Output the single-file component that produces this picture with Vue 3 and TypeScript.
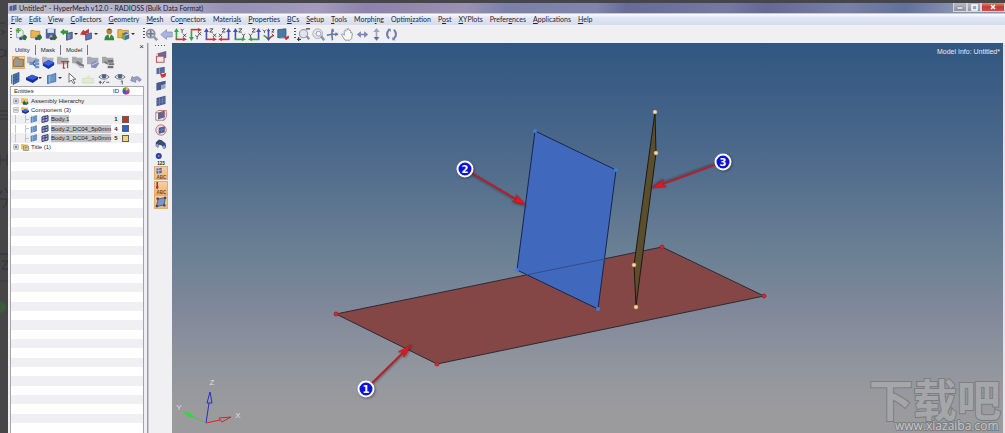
<script setup lang="ts">
interface MenuItem { label: string; key: number }
interface Tool { icon: string; name: string; caret?: boolean; active?: boolean }
interface Entity { name: string; icon: string; level: number; expand?: string; id?: number; color?: string }
interface Callout { n: number; x: number; y: number; tx: number; ty: number }

const menus: MenuItem[] = [
  { label: 'File', key: 0 }, { label: 'Edit', key: 0 }, { label: 'View', key: 0 },
  { label: 'Collectors', key: 0 }, { label: 'Geometry', key: 0 }, { label: 'Mesh', key: 0 },
  { label: 'Connectors', key: 2 }, { label: 'Materials', key: 7 }, { label: 'Properties', key: 0 },
  { label: 'BCs', key: 0 }, { label: 'Setup', key: 0 }, { label: 'Tools', key: 0 },
  { label: 'Morphing', key: 5 }, { label: 'Optimization', key: 5 }, { label: 'Post', key: 1 },
  { label: 'XYPlots', key: 0 }, { label: 'Preferences', key: 6 }, { label: 'Applications', key: 0 },
  { label: 'Help', key: 0 },
]

const fileTools: Tool[] = [
  { icon: 'new', name: 'New model' }, { icon: 'open', name: 'Open model' }, { icon: 'save', name: 'Save model' },
  { icon: 'import', name: 'Import', caret: true }, { icon: 'export', name: 'Export', caret: true },
  { icon: 'user', name: 'User profile' }, { icon: 'load', name: 'Load', caret: true },
]
const viewTools: Tool[] = [
  { icon: 'fit', name: 'Fit' }, { icon: 'back', name: 'Previous view' }, { icon: 'xy', name: 'XY top' },
  { icon: 'xyb', name: 'XY bottom' }, { icon: 'xz', name: 'XZ left' }, { icon: 'xzr', name: 'XZ right' },
  { icon: 'yz', name: 'YZ front' }, { icon: 'yzr', name: 'YZ rear' }, { icon: 'iso', name: 'Isometric' },
  { icon: 'saved', name: 'User views' },
]
const moveTools: Tool[] = [
  { icon: 'zoom', name: 'Zoom in or out' }, { icon: 'zoomc', name: 'Circle zoom' }, { icon: 'rotate', name: 'Rotate' },
  { icon: 'pan', name: 'Pan' }, { icon: 'lr', name: 'Rotate left or right' }, { icon: 'ud', name: 'Rotate up or down' },
  { icon: 'spin', name: 'Spin' },
]
const createTools: Tool[] = [
  { icon: 'folder', name: 'Model view', active: true }, { icon: 'tree', name: 'Assembly view' },
  { icon: 'comp', name: 'Component view' }, { icon: 'prop', name: 'Property view' },
  { icon: 'mat', name: 'Material view' }, { icon: 'include', name: 'Include view' }, { icon: 'stack', name: 'Load view' },
]
const selectTools: Tool[] = [
  { icon: 'geom', name: 'Elements and geometry' }, { icon: 'blue', name: 'Components', caret: true },
  { icon: 'flag', name: 'Geometry', caret: true }, { icon: 'cursor', name: 'Selector' },
  { icon: 'add', name: 'Add to panel' }, { icon: 'eyepm', name: 'Show or hide' },
  { icon: 'eye1', name: 'Isolate' }, { icon: 'undo', name: 'Reverse' },
]
const sideTools: Tool[] = [
  { icon: 'mask', name: 'Mask' }, { icon: 'unmask', name: 'Reverse mask' }, { icon: 'adj', name: 'Unmask adjacent' },
  { icon: 'all', name: 'Unmask all' }, { icon: 'shown', name: 'Unmask shown' }, { icon: 'sphere', name: 'Spherical clip' },
  { icon: 'find', name: 'Find' }, { icon: 'num', name: 'Numbers' },
  { icon: 'abc1', name: 'Element labels', active: true }, { icon: 'abc2', name: 'Load labels', active: true },
  { icon: 'handles', name: 'Element handles', active: true },
]

const tabs: string[] = ['Utility', 'Mask', 'Model']
const entities: Entity[] = [
  { name: 'Assembly Hierarchy', icon: 'asm', level: 0, expand: 'plus' },
  { name: 'Component (3)', icon: 'compf', level: 0, expand: 'minus' },
  { name: 'Body.1', icon: 'flag', level: 1, id: 1, color: '#c8321e' },
  { name: 'Body.2_DC04_5p0mm', icon: 'flag', level: 1, id: 4, color: '#2f62cf' },
  { name: 'Body.3_DC04_3p0mm', icon: 'flag', level: 1, id: 5, color: '#ecd774' },
  { name: 'Title (1)', icon: 'title', level: 0, expand: 'plus' },
]
const emptyRows = 30

const callouts: Callout[] = [
  { n: 1, x: 366, y: 389, tx: 411, ty: 345 },
  { n: 2, x: 465, y: 169, tx: 526, ty: 205 },
  { n: 3, x: 723, y: 162, tx: 652, ty: 188 },
]
const angle = (c: Callout): number => (Math.atan2(c.ty - c.y, c.tx - c.x) * 180) / Math.PI
const reach = (c: Callout): number => Math.hypot(c.tx - c.x, c.ty - c.y)
</script>

<template>
  <svg class="defs" aria-hidden="true">
    <defs>
      <symbol id="i-new" viewBox="0 0 16 16"><path d="M2 1h5l3 3v8H2z" fill="#e9edf4" stroke="#8d96a8" /><path d="M4 0v6M1 3h6" stroke="#3fae3a" stroke-width="2" /><path d="M5 12l3-3 3 3-3 2z" fill="#d6b13b" /><path d="M9 10l3-2 3 3-2 4-4-1z" fill="#2d6e3a" /><circle cx="7" cy="13" r="2" fill="#2b4ea8" /></symbol>
      <symbol id="i-open" viewBox="0 0 16 16"><path d="M1 3h4l1 1h6v8H1z" fill="#e8b456" stroke="#b98630" /><path d="M5 11l3-3 3 3-3 3z" fill="#d6b13b" /><path d="M9 9l4-1 2 4-3 3-3-1z" fill="#2d6e3a" /><circle cx="8" cy="13" r="2" fill="#2b4ea8" /></symbol>
      <symbol id="i-save" viewBox="0 0 16 16"><path d="M1 1h12v12H1z" fill="#4a64a2" /><path d="M3 1h8v5H3z" fill="#dde4f2" /><path d="M5 11l3-3 3 3-3 3z" fill="#d6b13b" /><path d="M9 9l4-1 2 4-3 3-3-1z" fill="#2d6e3a" /><circle cx="8" cy="13" r="2" fill="#2b4ea8" /></symbol>
      <symbol id="i-import" viewBox="0 0 16 16"><path d="M0 5l5-4v2h5v4H5v2z" fill="#2e9b35" /><path d="M8 7l7-2v8l-7 2z" fill="#5f76ac" stroke="#3c4a79" /><path d="M11 7v7" stroke="#8fa0c6" /></symbol>
      <symbol id="i-export" viewBox="0 0 16 16"><path d="M0 8l4-6 2 2 5-3v5l-4 1 1 2z" fill="#c93434" /><path d="M7 8l7-2v7l-7 2z" fill="#5f76ac" stroke="#3c4a79" /></symbol>
      <symbol id="i-user" viewBox="0 0 16 16"><circle cx="9" cy="4" r="3.500" fill="#b4803e" /><path d="M5 3q4-4 8 0l-1-1H6z" fill="#4c3018" /><path d="M3 15q0-7 6-7t6 7z" fill="#2f8a39" /><path d="M8 8l1 5 2-5z" fill="#f2f2f2" /></symbol>
      <symbol id="i-load" viewBox="0 0 16 16"><path d="M1 2h5l1 1h7v9H1z" fill="#e9b44c" stroke="#b98630" /><path d="M6 7l5-2 4 2v6l-5 2-4-2z" fill="#4b6db4" /><path d="M6 7l4 2v6l-4-2z" fill="#79a852" /><path d="M10 9l5-2" stroke="#fff" /></symbol>
      <symbol id="i-fit" viewBox="0 0 16 16"><circle cx="7" cy="7" r="5" fill="#d2d7e2" stroke="#8e94a6" stroke-width="2" /><path d="M11 11l4 4" stroke="#8e94a6" stroke-width="3" /><path d="M7 3v8M3 7h8" stroke="#6d7590" stroke-width="2" /></symbol>
      <symbol id="i-back" viewBox="0 0 16 16"><path d="M1 8l7-6v3h7v6H8v3z" fill="#a9b5dc" stroke="#8793c0" /></symbol>
      <symbol id="i-xy" viewBox="0 0 16 16"><path d="M3 14V3" stroke="#3aa34a" stroke-width="2" /><path d="M2 14h11" stroke="#c83a40" stroke-width="2" /><path d="M0 5l3-5 3 5z" fill="#3aa34a" /><path d="M11 11l5 3-5 2z" fill="#c83a40" /><path d="M8 1l2 2 2-2M10 3v3M11 7l4 4M15 7l-4 4" stroke="#333" fill="none" /></symbol>
      <symbol id="i-xyb" viewBox="0 0 16 16"><path d="M3 3v11" stroke="#3aa34a" stroke-width="2" /><path d="M2 2h11" stroke="#c83a40" stroke-width="2" /><path d="M0 11l3 5 3-5z" fill="#3aa34a" /><path d="M11 0l5 2-5 3z" fill="#c83a40" /><path d="M8 9l2 2 2-2M10 11v3M11 5l4 4M15 5l-4 4" stroke="#333" fill="none" /></symbol>
      <symbol id="i-xz" viewBox="0 0 16 16"><path d="M3 14V3" stroke="#4353b5" stroke-width="2" /><path d="M2 14h11" stroke="#c83a40" stroke-width="2" /><path d="M0 5l3-5 3 5z" fill="#4353b5" /><path d="M11 11l5 3-5 2z" fill="#c83a40" /><path d="M7 1h4L7 5h4M11 7l4 4M15 7l-4 4" stroke="#333" fill="none" /></symbol>
      <symbol id="i-xzr" viewBox="0 0 16 16"><path d="M13 14V3" stroke="#4353b5" stroke-width="2" /><path d="M3 14h11" stroke="#c83a40" stroke-width="2" /><path d="M10 5l3-5 3 5z" fill="#4353b5" /><path d="M5 11l-5 3 5 2z" fill="#c83a40" /><path d="M5 1h4L5 5h4M1 7l4 4M5 7l-4 4" stroke="#333" fill="none" /></symbol>
      <symbol id="i-yz" viewBox="0 0 16 16"><path d="M3 14V3" stroke="#4353b5" stroke-width="2" /><path d="M2 14h11" stroke="#3aa34a" stroke-width="2" /><path d="M0 5l3-5 3 5z" fill="#4353b5" /><path d="M11 11l5 3-5 2z" fill="#3aa34a" /><path d="M7 1h4L7 5h4M11 7l2 2 2-2M13 9v3" stroke="#333" fill="none" /></symbol>
      <symbol id="i-yzr" viewBox="0 0 16 16"><path d="M13 14V3" stroke="#4353b5" stroke-width="2" /><path d="M3 14h11" stroke="#3aa34a" stroke-width="2" /><path d="M10 5l3-5 3 5z" fill="#4353b5" /><path d="M5 11l-5 3 5 2z" fill="#3aa34a" /><path d="M5 1h4L5 5h4M1 7l2 2 2-2M3 9v3" stroke="#333" fill="none" /></symbol>
      <symbol id="i-iso" viewBox="0 0 16 16"><path d="M8 12V3" stroke="#4353b5" stroke-width="2" /><path d="M8 13L2 9" stroke="#3aa34a" stroke-width="2" /><path d="M8 13l6-4" stroke="#c83a40" stroke-width="2" /><path d="M6 4l2-4 2 4z" fill="#4353b5" /><path d="M5 12l3 4 3-4z" fill="#4a5a8a" /><path d="M1 2l2 2 2-2M3 4v2M12 2h3l-3 3h3M12 7l3 3" stroke="#333" fill="none" /></symbol>
      <symbol id="i-saved" viewBox="0 0 16 16"><path d="M1 2l10-1v10L1 12z" fill="#4a7aa8" stroke="#34557c" /><path d="M2 13l4-2 4 2" fill="#7c93ba" /><path d="M8 10l3 5 4-3-1-3-2 2z" fill="#d03034" /></symbol>
      <symbol id="i-zoom" viewBox="0 0 16 16"><circle cx="8" cy="7" r="5" fill="#e2e5ec" stroke="#9ba1b1" stroke-width="1.500" /><path d="M12 10l3 4" stroke="#8d94a6" stroke-width="3" /><path d="M2 11v5M0 14h5M11 1h5" stroke="#444" stroke-width="1.500" /></symbol>
      <symbol id="i-zoomc" viewBox="0 0 16 16"><circle cx="7" cy="7" r="6" fill="#e2e5ec" stroke="#a3a9b8" /><circle cx="8" cy="7" r="3" fill="#f3f3f6" stroke="#8d94a6" /><path d="M11 10l4 5" stroke="#8d94a6" stroke-width="3" /></symbol>
      <symbol id="i-rotate" viewBox="0 0 16 16"><path d="M8 1q-2 7 0 14M1 9q7-2 14-1" fill="none" stroke="#6a75a4" stroke-width="2" /><path d="M6 4l3-3 1 4zM12 5l3 3-4 2z" fill="#6a75a4" /></symbol>
      <symbol id="i-pan" viewBox="0 0 16 16"><path d="M5 15L1 9q-1-3 2-1l1 1V4q1-2 2 0V2q1-2 2 0V1q2-1 2 1v1q2-1 2 1v2q2-1 2 1l-1 6-2 2z" fill="#f7f7f7" stroke="#848891" /></symbol>
      <symbol id="i-lr" viewBox="0 0 16 16"><path d="M1 8l5-4v3h4V4l5 4-5 4V9H6v3z" fill="#7b84b5" /></symbol>
      <symbol id="i-ud" viewBox="0 0 16 16"><path d="M8 0l4 5H9v6h3l-4 5-4-5h3V5H4z" fill="#9aa4cc" /><path d="M5 11h6l-3 4z" fill="#5f699b" /></symbol>
      <symbol id="i-spin" viewBox="0 0 16 16"><path d="M5 2q-5 6 0 11M11 2q5 6 0 11" fill="none" stroke="#727daf" stroke-width="2.500" /><path d="M3 1h4v4zM13 15H9v-4z" fill="#727daf" /></symbol>
      <symbol id="i-folder" viewBox="0 0 16 16"><path d="M2 5q0-1 1-1l1-2h4l1 2h5v9H2z" fill="#a19787" stroke="#74695b" /></symbol>
      <symbol id="i-tree" viewBox="0 0 16 16"><path d="M0 1h5l1 1h7v7H0z" fill="#b5b6b9" /><path d="M4 9h3M7 9l4-4M7 9l4 4" stroke="#4569a9" stroke-width="2" /><path d="M3 7h4v4H3zM10 4h5v3h-5zM10 8h5v3h-5zM10 12h5v3h-5z" fill="#6b95cf" /></symbol>
      <symbol id="i-comp" viewBox="0 0 16 16"><path d="M0 1h5l1 1h8v7H0z" fill="#b5b6b9" /><path d="M1 9l7-4 7 3v3l-7 5-7-4z" fill="#1836ae" /><path d="M1 9l7-4 7 3-7 4z" fill="#3a64dc" /></symbol>
      <symbol id="i-prop" viewBox="0 0 16 16"><path d="M0 1h5l1 1h8v8H0z" fill="#b0b0b3" /><path d="M5 7h10M8 7v8M13 7v8M7 15h3" stroke="#ad4648" stroke-width="1.500" /></symbol>
      <symbol id="i-mat" viewBox="0 0 16 16"><path d="M0 1h5l1 1h7v7H0z" fill="#a9aaad" /><path d="M3 9l4-3 8 5-1 4-4-1z" fill="#77797d" /><path d="M4 9l4 3 6 2" stroke="#dddde0" stroke-width="1.500" fill="none" /></symbol>
      <symbol id="i-include" viewBox="0 0 16 16"><path d="M0 1h5l1 1h8v8H0z" fill="#a8aab3" /><path d="M5 9l5-3 5 3-4 6-6-1z" fill="#878fbf" /><path d="M6 11l7-3" stroke="#d6daf0" /></symbol>
      <symbol id="i-stack" viewBox="0 0 16 16"><path d="M0 1h5l1 1h8v7H0z" fill="#a6a6aa" /><path d="M7 5h7v3H7zM8 9h7v2H8zM7 12h7v3H7z" fill="#747478" /><path d="M3 7l4 3" stroke="#747478" stroke-width="2" /></symbol>
      <symbol id="i-geom" viewBox="0 0 16 16"><path d="M4 3l8-3v12l-8 4z" fill="#4e79b8" stroke="#2c4f88" /><path d="M2 3v12M8 2v12M4 7l8-3M4 11l8-3" stroke="#2f5288" /></symbol>
      <symbol id="i-blue" viewBox="0 0 16 16"><path d="M0 7l8-4 8 3v3l-7 5-9-4z" fill="#142c9c" /><path d="M0 7l8-4 8 3-7 4z" fill="#345ad6" /></symbol>
      <symbol id="i-flag" viewBox="0 0 16 16"><path d="M2 4q5 0 11-3v11q-6 1-11 3z" fill="#6997cd" stroke="#34619f" /><path d="M5 4v10" stroke="#a8c7e8" /></symbol>
      <symbol id="i-cursor" viewBox="0 0 16 16"><path d="M4 1v12l3-3 3 5 2-1-3-5h4z" fill="#fff" stroke="#444" /></symbol>
      <symbol id="i-add" viewBox="0 0 16 16"><path d="M1 8h14v6H1z" fill="#e2ecd2" stroke="#cbdab8" /><path d="M5 8l4-5 3 5z" fill="#e6e5c3" /></symbol>
      <symbol id="i-eyepm" viewBox="0 0 16 16"><path d="M1 6q7-7 14 0-7 6-14 0z" fill="#e6e9ee" stroke="#59606e" /><circle cx="8" cy="5" r="3" fill="#4e6684" /><path d="M1 13h4M3 11v4M6 15l3-4M11 13h4" stroke="#333" /></symbol>
      <symbol id="i-eye1" viewBox="0 0 16 16"><path d="M1 6q7-7 14 0-7 6-14 0z" fill="#e6e9ee" stroke="#59606e" /><circle cx="8" cy="5" r="3" fill="#4e6684" /><path d="M9 12l2-1v5" stroke="#333" fill="none" /></symbol>
      <symbol id="i-undo" viewBox="0 0 16 16"><path d="M1 11l2-6 2 2q6-4 10 3l-3 2q-2-4-5-2l1 3z" fill="#9d9fc8" stroke="#7b7daa" /></symbol>
      <symbol id="i-mask" viewBox="0 0 16 16"><path d="M4 3l11-3v9l-11 3z" fill="#56699c" /><path d="M2 7h10v8H2z" fill="#f1eaee" stroke="#c2575d" stroke-width="1.500" /><path d="M2 4h10v4" fill="none" stroke="#c2575d" /></symbol>
      <symbol id="i-unmask" viewBox="0 0 16 16"><path d="M2 3l11-2v8L2 11z" fill="#56699c" /><path d="M6 3v7" stroke="#a2aecb" /><path d="M6 9l4 2 5-2-1 5-5 2z" fill="#cf3434" /></symbol>
      <symbol id="i-adj" viewBox="0 0 16 16"><path d="M2 4l12-3v10L2 14z" fill="#98a5c4" /><path d="M2 4l12-3v4L8 7v6l-6 1z" fill="#485b91" /></symbol>
      <symbol id="i-all" viewBox="0 0 16 16"><path d="M2 4l12-3v11L2 15z" fill="#485b91" /><path d="M6 3v11M10 2v11M2 8l12-3M2 11l12-3" stroke="#7685b0" /></symbol>
      <symbol id="i-shown" viewBox="0 0 16 16"><path d="M4 5l9-3v9l-9 3z" fill="#56699c" /><path d="M1 5h11v10H1zM1 5l3-3h11v9l-3 4" fill="none" stroke="#c2575d" /></symbol>
      <symbol id="i-sphere" viewBox="0 0 16 16"><circle cx="8" cy="8" r="7" fill="#e8dfe3" stroke="#c2575d" /><path d="M5 5l8-2v8l-8 2z" fill="#485b91" /><path d="M9 4v8M5 9l8-2" stroke="#7685b0" /></symbol>
      <symbol id="i-find" viewBox="0 0 16 16"><path d="M1 6l4-4 4 1 5 4 1 5-3 3-3-5-3-1-2 4-3-2z" fill="#3a4d7a" /><circle cx="3" cy="10" r="2" fill="#8da4cc" /><circle cx="12" cy="12" r="2" fill="#8da4cc" /></symbol>
      <symbol id="i-num" viewBox="0 0 16 16"><circle cx="5" cy="4" r="4" fill="#2f3fa4" /><circle cx="5" cy="4" r="1" fill="#b9c2ec" /><text x="3" y="16" font-size="6" font-weight="700" fill="#222">123</text></symbol>
      <symbol id="i-abc1" viewBox="0 0 16 16"><path d="M2 2l7-1v7l-7 1z" fill="#56699c" /><path d="M5 1v8M2 5l7-1" stroke="#c8cfe0" /><text x="2" y="16" font-size="6" font-weight="700" fill="#7c4522">ABC</text></symbol>
      <symbol id="i-abc2" viewBox="0 0 16 16"><path d="M3 0v9" stroke="#a82b2b" stroke-width="2" /><path d="M1 6h4l-2 4z" fill="#a82b2b" /><text x="2" y="16" font-size="6" font-weight="700" fill="#7c4522">ABC</text></symbol>
      <symbol id="i-handles" viewBox="0 0 16 16"><path d="M4 4l10-2-2 10-10 2z" fill="#7997c8" stroke="#34496f" /><path d="M2 2h3v3H2zM12 1h3v3h-3zM1 12h3v3H1zM11 11h3v3h-3z" fill="#34496f" /></symbol>
      <symbol id="i-asm" viewBox="0 0 16 16"><path d="M0 2h6l1 1h7v9H0z" fill="#ecc85a" /><path d="M3 11l4-4 4 3 3-1 1 4-4 3-6-1z" fill="#2f7a40" /><circle cx="6" cy="13" r="2.500" fill="#2748b2" /><path d="M8 8l3 3" stroke="#e8d24d" stroke-width="2" /></symbol>
      <symbol id="i-compf" viewBox="0 0 16 16"><path d="M0 2h6l1 1h7v8H0z" fill="#ecc85a" /><path d="M2 9l7-3 7 3v3l-7 4-7-3z" fill="#1a35ab" /><path d="M2 9l7-3 7 3-7 3z" fill="#436be0" /></symbol>
      <symbol id="i-title" viewBox="0 0 16 16"><path d="M0 2h6l1 1h7v10H0z" fill="#ecc85a" /><path d="M5 6h10v9H5z" fill="#d8d2bd" stroke="#6c5b36" /><path d="M7 9h6M7 12h5" stroke="#6c5b36" /></symbol>
      <symbol id="i-mesh" viewBox="0 0 16 16"><path d="M2 4l12-3v11L2 15z" fill="#a6aacb" stroke="#3a3f78" stroke-width="2" /><path d="M8 2v12M2 9l12-3" stroke="#3a3f78" stroke-width="2" /></symbol>
      <symbol id="i-plus" viewBox="0 0 16 16"><path d="M2 2h12v12H2z" fill="#fff" stroke="#9a9a9e" stroke-width="2" /><path d="M4 8h8M8 4v8" stroke="#444" stroke-width="2" /></symbol>
      <symbol id="i-minus" viewBox="0 0 16 16"><path d="M2 2h12v12H2z" fill="#fff" stroke="#9a9a9e" stroke-width="2" /><path d="M4 8h8" stroke="#444" stroke-width="2" /></symbol>
    </defs>
  </svg>

  <div class="desktop">
    <svg class="backdrop" viewBox="0 3 8 430" preserveAspectRatio="xMinYMin slice" aria-hidden="true">
      <path d="M0 23h5M1 30l4 2-4 3M0 50q4-2 5 2t-5 5M6 49v8M0 111h8M0 115h8M0 119h8M0 154v12M0 160h7M7 154v12M2 190l-2 4M5 188l3 5M0 199h7q0 6-4 9M0 254h8M2 261h6l-6 8h6" fill="none" stroke="#333234" />
      <path d="M0 281h8" stroke="#3b3a3c" />
      <circle cx="0" cy="307" r="6" fill="#3d5a3f" />
    </svg>

    <div class="window">
      <header class="titlebar">
        <svg class="logo" viewBox="0 0 16 16" aria-hidden="true"><path d="M1 5l5-2v10l-5 1zM7 3l8-2v11l-8 2z" fill="#53618c" /></svg>
        <h1>Untitled* - HyperMesh v12.0 - RADIOSS (Bulk Data Format)</h1>
        <div class="controls">
          <button type="button" aria-label="Minimize"><svg viewBox="0 0 12 8"><path d="M3 4h6v2H3z" fill="#fff" stroke="#666" stroke-width=".5" /></svg></button>
          <button type="button" aria-label="Restore"><svg viewBox="0 0 12 8"><path d="M4 2h5v5H4z" fill="none" stroke="#fff" stroke-width="1.500" /></svg></button>
          <button type="button" class="close" aria-label="Close"><svg viewBox="0 0 12 8"><path d="M4 2l4 4M8 2L4 6" stroke="#fff" stroke-width="1.500" /></svg></button>
        </div>
      </header>

      <nav class="menubar">
        <button v-for="m in menus" :key="m.label" type="button">{{ m.label.slice(0, m.key) }}<u>{{ m.label[m.key] }}</u>{{ m.label.slice(m.key + 1) }}</button>
      </nav>

      <div class="toolbar">
        <i class="grip"></i>
        <div class="group files">
          <button v-for="t in fileTools" :key="t.icon" type="button" class="tool" :class="[t.icon, { drop: t.caret }]" :aria-label="t.name">
            <svg class="icon"><use :href="'#i-' + t.icon" /></svg>
          </button>
        </div>
        <i class="grip"></i>
        <div class="group views">
          <button v-for="t in viewTools" :key="t.icon" type="button" class="tool" :aria-label="t.name">
            <svg class="icon"><use :href="'#i-' + t.icon" /></svg>
          </button>
        </div>
        <i class="grip"></i>
        <div class="group moves">
          <button v-for="t in moveTools" :key="t.icon" type="button" class="tool" :aria-label="t.name">
            <svg class="icon"><use :href="'#i-' + t.icon" /></svg>
          </button>
        </div>
      </div>

      <main class="body">
        <aside class="browser">
          <div class="tabs">
            <button v-for="t in tabs" :key="t" type="button">{{ t }}</button>
            <button type="button" class="shut" aria-label="Close browser">×</button>
          </div>
          <div class="row create">
            <button v-for="t in createTools" :key="t.icon" type="button" class="tool" :class="{ active: t.active }" :aria-label="t.name">
              <svg class="icon"><use :href="'#i-' + t.icon" /></svg>
            </button>
          </div>
          <div class="row select">
            <button v-for="t in selectTools" :key="t.icon" type="button" class="tool" :class="{ drop: t.caret }" :aria-label="t.name">
              <svg class="icon"><use :href="'#i-' + t.icon" /></svg>
            </button>
          </div>
          <div class="sheet">
            <table>
              <thead>
                <tr>
                  <th class="name">Entities</th>
                  <th class="id">ID</th>
                  <th class="swatch">
                    <svg viewBox="0 0 16 16" role="img" aria-label="Color"><circle cx="8" cy="8" r="7" fill="#3a56d8" /><path d="M8 8V1a7 7 0 0 1 6 4z" fill="#d9c93d" /><path d="M8 8L2 4a7 7 0 0 1 6-3z" fill="#3fae52" /><path d="M8 8l6-3a7 7 0 0 1-2 8z" fill="#d84238" /><path d="M8 8l4 5a7 7 0 0 1-5 2z" fill="#b23fb8" /></svg>
                  </th>
                  <th class="rest"></th>
                </tr>
              </thead>
              <tbody>
                <tr v-for="e in entities" :key="e.name">
                  <td>
                    <div class="entity" :class="{ child: e.level }">
                      <svg v-if="e.expand" class="expander"><use :href="'#i-' + e.expand" /></svg>
                      <svg class="glyph"><use :href="'#i-' + e.icon" /></svg>
                      <svg v-if="e.level" class="glyph"><use href="#i-mesh" /></svg>
                      <span>{{ e.name }}</span>
                    </div>
                  </td>
                  <td class="id"><b v-if="e.id">{{ e.id }}</b></td>
                  <td class="swatch"><i v-if="e.color" :style="{ background: e.color }"></i></td>
                  <td></td>
                </tr>
                <tr v-for="n in emptyRows" :key="n" aria-hidden="true"><td colspan="4"></td></tr>
              </tbody>
            </table>
          </div>
        </aside>

        <div class="strip">
          <i class="grip flat"></i>
          <div class="stack">
            <button v-for="t in sideTools" :key="t.icon" type="button" class="tool" :class="{ active: t.active }" :aria-label="t.name">
              <svg class="icon"><use :href="'#i-' + t.icon" /></svg>
            </button>
          </div>
        </div>

        <section class="viewport">
          <p class="info">Model Info: Untitled*</p>
          <svg class="scene" viewBox="172 43 831 390" role="img" aria-label="Model view">
            <polygon points="336,314 662,247 764,296 437,364" fill="#854745" stroke="#2a2a33" />
            <polygon points="535,131 616,170 598,309 517,270" fill="#4068bc" stroke="#15264f" />
            <path d="M526 275L605 259" stroke="#2f4f95" />
            <polygon points="655,112 656,153 636,306 634,265" fill="#5a4e2c" stroke="#1d1a14" />
            <g fill="#d02a34" stroke="#a8232d"><circle cx="336" cy="314" r="2" /><circle cx="662" cy="247" r="2" /><circle cx="764" cy="296" r="2" /><circle cx="437" cy="364" r="2" /></g>
            <g fill="#3f7ddd"><circle cx="535" cy="131" r="2" /><circle cx="616" cy="170" r="2" /><circle cx="598" cy="309" r="2" /><circle cx="517" cy="270" r="2" /></g>
            <g fill="#f6dca0" stroke="#b89a5c" stroke-width=".5"><circle cx="655" cy="112" r="2" /><circle cx="656" cy="153" r="2" /><circle cx="634" cy="265" r="2" /><circle cx="636" cy="307" r="2" /></g>

            <g v-for="c in callouts" :key="c.n">
              <g class="pointer" :transform="`translate(${c.x} ${c.y}) rotate(${angle(c)})`">
                <path :d="`M8 0H${reach(c) - 10}`" stroke="#b3202a" stroke-width="2" />
                <path :d="`M${reach(c)} 0l-14 -4l3 4l-3 4z`" fill="#e6161c" stroke="#a3161d" stroke-width=".5" />
              </g>
              <circle class="pointer" :cx="c.x" :cy="c.y" r="7.500" fill="#0a12dc" stroke="#fff" stroke-width="2" />
              <text class="number" :x="c.x" :y="c.y + 4">{{ c.n }}</text>
            </g>

            <g fill="none">
              <path d="M206 423L209 403M207 403l3-11 2 11z" stroke="#2a2fbc" />
              <path d="M206 423l14-3M219 418l12-1-9 5z" stroke="#d2262c" />
              <path d="M206 423l-13-6" stroke="#4bc35a" />
              <path d="M182 411l9 2 4 5-6-1z" fill="#3ad245" />
            </g>
            <g class="axis"><text x="212" y="385">Z</text><text x="238" y="418">X</text><text x="179" y="410">Y</text></g>

            <g class="brand"><text class="big" x="869" y="417">下载吧</text><text class="small" x="895" y="430">www.xiazaiba.com</text></g>
          </svg>
        </section>
      </main>
    </div>
  </div>
</template>

<style>
body { background: #464547; }
</style>

<style scoped>
.defs { position: absolute; width: 0; height: 0; }
.desktop {
  box-sizing: border-box; display: flex; height: 100vh; padding-top: 3px; overflow: hidden;
  background: #464547; font: 7px/9px Lato, "Noto Sans", sans-serif; color: #26262e;
}
.backdrop { width: 8px; height: 100%; flex: none; }
.window { flex: 1; min-width: 0; display: flex; flex-direction: column; background: #f0eff2; }
button { appearance: none; border: 0; background: none; padding: 0; margin: 0; font: inherit; color: inherit; }
.icon, .glyph, .expander { display: block; flex: none; }
.icon { width: 13px; height: 13px; }

.titlebar {
  display: flex; align-items: center; height: 11px; flex: none; gap: 2px; padding-left: 1px;
  border-bottom: 1px solid #c9c7d6; box-sizing: border-box;
  background: linear-gradient(100deg, #b9bace 0%, #b3b0cc 16%, #9690b5 22%, #a49bbd 31%, #8c82ab 36%, #9b91b2 46%, #7b80a8 50%, #8185ac 59%, #676b97 62%, #747aa2 72%, #646995 76%, #7880a5 84%, #62719b 90%, #8993b3 95%);
}
.logo { width: 8px; height: 8px; }
.titlebar h1 { margin: 0; font: 7px/10px Lato, sans-serif; color: #1b1b28; white-space: nowrap; }
.controls { display: flex; margin-left: auto; align-self: flex-start; }
.controls button { width: 14px; height: 9px; background: linear-gradient(#b7bac8, #8f93a8); border: 1px solid #d4d5df; border-top: 0; box-sizing: border-box; }
.controls .close { width: 24px; background: linear-gradient(#dc8b80, #c8382c 50%, #cf5043); }
.controls svg { display: block; width: 100%; height: 100%; }

.menubar { display: flex; align-items: center; gap: 7px; height: 11px; flex: none; padding-left: 3px; background: linear-gradient(#fbfbfe, #e2e6f4 35%, #d6dcee); }
.menubar button { white-space: nowrap; }
.menubar u { text-underline-offset: 1px; text-decoration-thickness: 1px; }

.toolbar { display: flex; align-items: center; height: 18px; flex: none; padding-left: 2px; }
.grip { width: 2px; height: 12px; flex: none; background: repeating-linear-gradient(#55555b 0 1px, transparent 1px 3px); }
.group { display: flex; }
.files { gap: 2px; margin: 0 4px 0 3px; width: 124px; }
.views { justify-content: space-between; width: 145px; margin-right: 4px; }
.moves { justify-content: space-between; width: 101px; margin-left: 1px; }
.tool { display: flex; align-items: center; }
.drop::after { content: ""; border: 2px solid transparent; border-top-color: #333; border-bottom: 0; margin-left: 1px; }
.user { margin-left: 2px; }

.body { flex: 1; min-height: 0; display: flex; }
.browser { width: 140px; flex: none; display: flex; flex-direction: column; border-right: 1px solid #9d9ca2; box-sizing: border-box; padding: 0 3px 0 2px; }
.tabs { display: flex; height: 12px; align-items: flex-end; font: 6px/8px "Liberation Sans", sans-serif; }
.tabs button { padding: 0 5px; height: 10px; border-right: 1px solid #77777d; }
.tabs .shut { margin-left: auto; align-self: flex-start; padding: 0; height: 8px; border: 0; font-size: 8px; line-height: 6px; }
.row { display: flex; align-items: center; height: 15px; }
.create { gap: 2px; padding-left: 2px; }
.select { gap: 4px; height: 16px; }
.select .icon { width: 12px; height: 13px; }
.select .drop::after { margin-left: 0; }
.active { background: linear-gradient(#f7cf9f, #f0b578); outline: 1px solid #e3ab74; outline-offset: -1px; }

.sheet { flex: 1; min-height: 0; border: 1px solid #a5a4aa; border-bottom: 0; background: #fff; }
table { width: 100%; height: 100%; border-collapse: collapse; table-layout: fixed; font: 6px/8px "Liberation Sans", sans-serif; }
th, td { padding: 0; text-align: left; font-weight: 400; height: 8px; }
th { padding-left: 3px; border-bottom: 1px solid #d2d1d6; }
th svg { display: block; width: 8px; height: 8px; }
th.name { width: 96px; }
th.id { width: 12px; padding: 0; text-align: center; }
th.swatch { width: 12px; padding: 0; }
td.id { text-align: center; }
td.swatch i { display: block; width: 7px; height: 7px; border: 1px solid #6a5c58; box-sizing: border-box; }
tbody tr:nth-child(odd) { background: #f0eff2; }
.entity { display: flex; align-items: center; gap: 2px; height: 8px; padding-left: 2px; white-space: nowrap; }
.entity.child {
  padding-left: 19px;
  background: linear-gradient(#c4c4c8, #c4c4c8) 14px 50% / 4px 1px no-repeat, linear-gradient(#c4c4c8, #c4c4c8) 14px 0 / 1px 100% no-repeat, linear-gradient(#c4c4c8, #c4c4c8) 4px 0 / 1px 100% no-repeat;
}
.child .glyph:first-child { margin-right: 1px; }
.child span { background: #c3c2c6; }
.expander { width: 6px; height: 6px; }
.glyph { width: 8px; height: 8px; }

.strip { width: 24px; flex: none; box-sizing: border-box; display: flex; flex-direction: column; align-items: center; border-left: 1px solid #c9c8cd; padding-top: 2px; }
.grip.flat { width: 12px; height: 1px; margin-bottom: 4px; background: repeating-linear-gradient(90deg, #55555b 0 1px, transparent 1px 3px); }
.stack { display: flex; flex-direction: column; justify-content: space-between; height: 159px; }
.strip .tool { width: 14px; height: 14px; justify-content: center; }
.strip .icon { width: 12px; height: 12px; font-family: "Liberation Sans", sans-serif; }

.viewport { flex: 1; min-width: 0; position: relative; border-right: 2px solid #e4e3ea; background: linear-gradient(#305782 0%, #3e5f86 14%, #526d8d 33%, #6c8194 55%, #82899b 70%, #90959d 82%, #9b9b9e 94%, #9b9b9e 100%); }
.scene { display: block; width: 100%; height: 100%; }
.info { position: absolute; top: 4px; right: 3px; margin: 0; font: 7px/9px "Liberation Sans", sans-serif; color: #e6ecf3; }
.pointer { filter: drop-shadow(1px 1px 1px rgba(30, 30, 40, .5)); }
.number { font: 700 10px "DejaVu Sans", sans-serif; fill: #fff; text-anchor: middle; }
.axis { font: 8px "Liberation Sans", sans-serif; fill: #dcdde2; text-anchor: middle; }
.brand { fill: #a4a6a9; stroke: #7c7e82; stroke-width: 2px; paint-order: stroke; }
.big { font: 700 44px "Noto Sans CJK SC", sans-serif; }
.small { font: 12px "Open Sans", sans-serif; fill: #c5c6c9; }
</style>
